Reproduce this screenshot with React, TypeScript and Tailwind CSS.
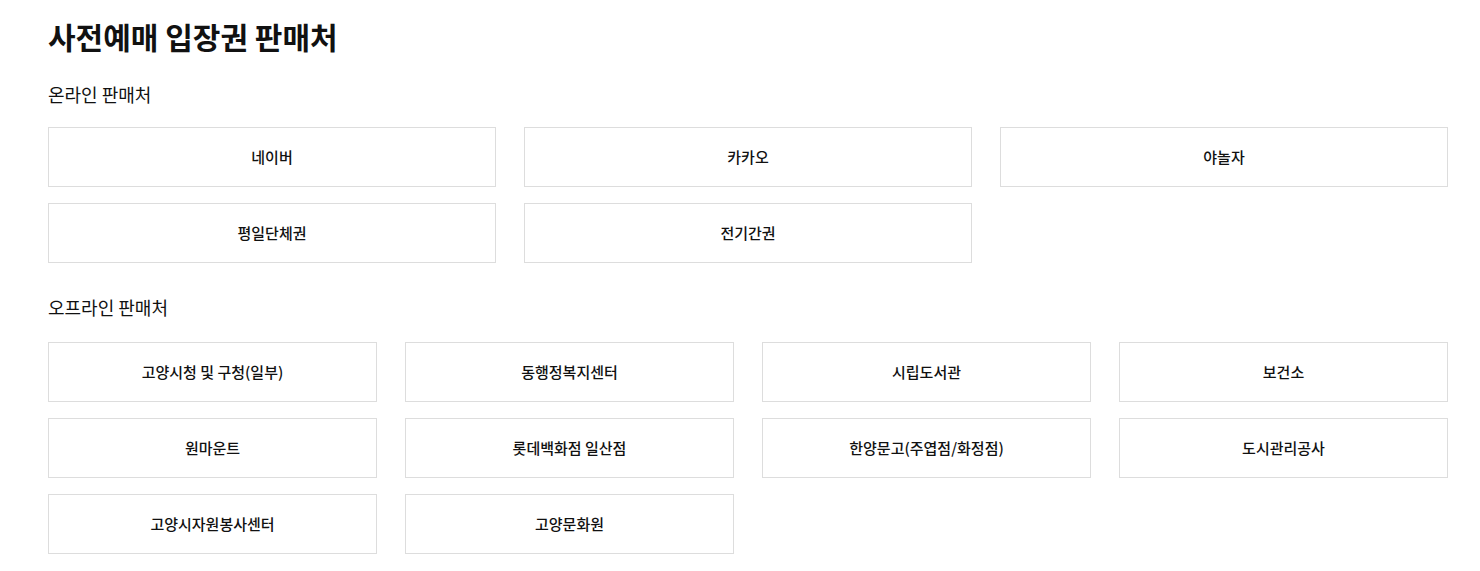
import React from 'react';

const online = ['네이버', '카카오', '야놀자', '평일단체권', '전기간권'];
const offline = [
    '고양시청 및 구청(일부)',
    '동행정복지센터',
    '시립도서관',
    '보건소',
    '원마운트',
    '롯데백화점 일산점',
    '한양문고(주엽점/화정점)',
    '도시관리공사',
    '고양시자원봉사센터',
    '고양문화원',
];

const Shop: React.FC<{ name: string }> = ({ name }) => (
    <div className="h-[60px] flex items-center justify-center border border-[#dddddd] bg-white text-[15px] font-medium text-[#111111]">
        {name}
    </div>
);

export default function App() {
    return (
        <div
            className="bg-white pl-12 pt-[16px] pb-[17px]"
            style={{ fontFamily: '"Noto Sans CJK KR", "Noto Sans", sans-serif' }}
        >
            <div className="w-[1400px]">
                <h2 className="text-[30px] leading-[40px] font-bold text-[#111111]">사전예매 입장권 판매처</h2>

                <h3 className="mt-[25px] text-[18px] leading-[26px] font-normal text-[#111111]">온라인 판매처</h3>
                <div className="mt-[20px] grid grid-cols-3 gap-x-[28px] gap-y-[16px]">
                    {online.map(n => (
                        <Shop key={n} name={n} />
                    ))}
                </div>

                <h3 className="mt-[31px] text-[18px] leading-[26px] font-normal text-[#111111]">오프라인 판매처</h3>
                <div className="mt-[22px] grid grid-cols-4 gap-x-[28px] gap-y-[16px]">
                    {offline.map(n => (
                        <Shop key={n} name={n} />
                    ))}
                </div>
            </div>
        </div>
    );
}
